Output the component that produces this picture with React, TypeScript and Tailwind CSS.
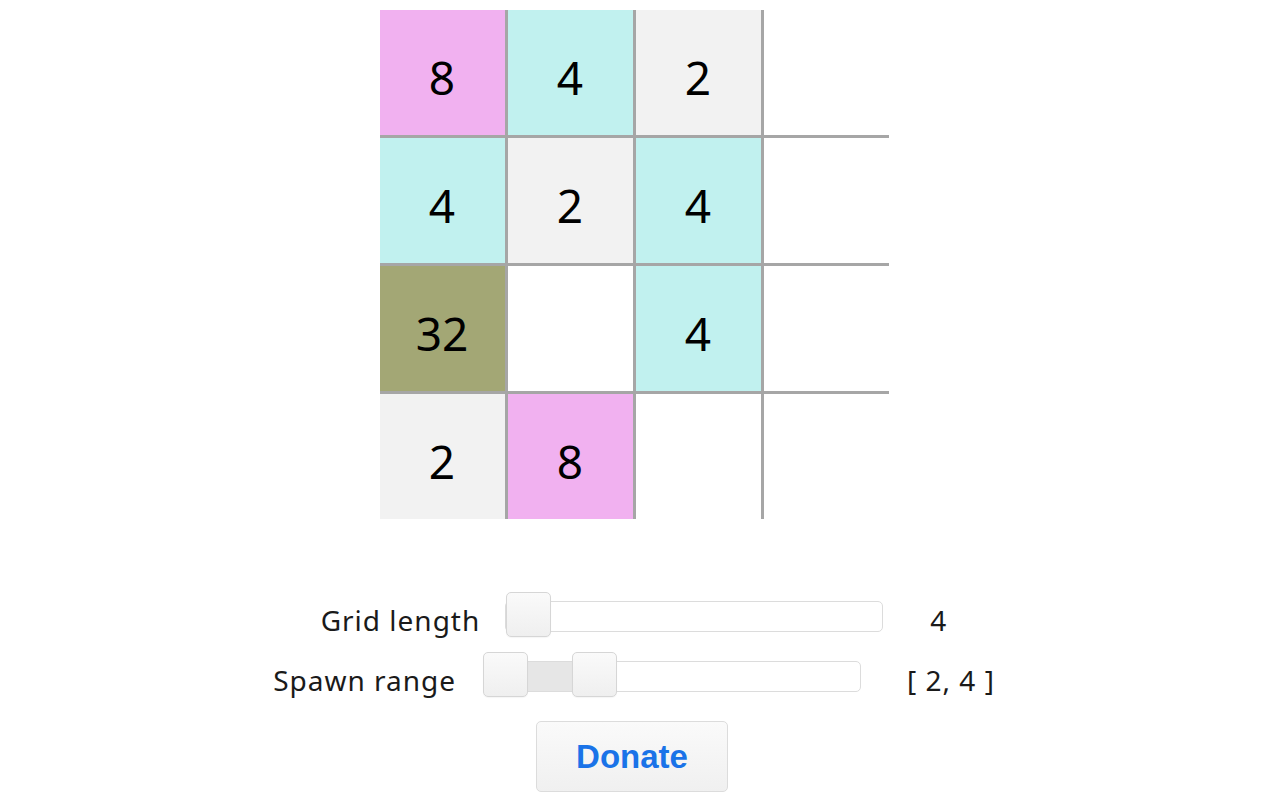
import React from "react";

const cells: (number | null)[][] = [
  [8, 4, 2, null],
  [4, 2, 4, null],
  [32, null, 4, null],
  [2, 8, null, null],
];

function tileColor(v: number | null) {
  if (v === 2) return "bg-[#f2f2f2]";
  if (v === 4) return "bg-[#c1f1ef]";
  if (v === 8) return "bg-[#f1b1f0]";
  if (v === 32) return "bg-[#a3a775]";
  return "bg-white";
}

function Thumb({ left }: { left: number }) {
  return (
    <div
      className="absolute top-[-10px] h-[45px] w-[45px] rounded-[5px] border border-[#d6d6d6] bg-gradient-to-b from-[#fafafa] to-[#efefef] shadow-[0_1px_1px_rgba(0,0,0,0.04)]"
      style={{ left }}
    />
  );
}

export default function App() {
  return (
    <div className="w-[1268px] min-h-[800px] bg-white pt-[10px] flex flex-col items-center font-['Noto_Sans','Open_Sans',sans-serif] text-[#1a1a1a]">
      <div className="grid grid-cols-[repeat(4,125px)] grid-rows-[repeat(4,125px)] gap-[3px] bg-[#a6a6a6]">
        {cells.flat().map((v, i) => (
          <div
            key={i}
            className={`${tileColor(v)} flex items-center justify-center pt-[10px] text-[46px] text-black`}
          >
            {v ?? ""}
          </div>
        ))}
      </div>

      <div className="mt-[73px] flex flex-col items-center gap-[15px]">
        <div className="flex h-[45px] items-start">
          <span className="mt-[14px] mr-[25px] text-[28px] leading-none tracking-[1px]">Grid length</span>
          <div className="relative mt-[9px] h-[31px] w-[378px] rounded-[5px] border border-[#dcdcdc] bg-white">
            <Thumb left={0} />
          </div>
          <span className="mt-[14px] ml-[47px] text-[28px] leading-none tracking-[1px]">4</span>
        </div>

        <div className="flex h-[45px] items-start">
          <span className="mt-[14px] mr-[27px] text-[28px] leading-none tracking-[1px]">Spawn range</span>
          <div className="relative mt-[9px] h-[31px] w-[378px] rounded-[5px] border border-[#dcdcdc] bg-white">
            <div className="absolute top-0 bottom-0 left-[43px] w-[46px] bg-[#e6e6e6]" />
            <Thumb left={-1} />
            <Thumb left={88} />
          </div>
          <span className="mt-[14px] ml-[46px] text-[28px] leading-none tracking-[1px]">[ 2, 4 ]</span>
        </div>

        <button className="mt-[9px] mr-[4px] h-[71px] w-[192px] rounded-[5px] border border-[#dcdcdc] bg-gradient-to-b from-[#fafafa] to-[#f0f0f0] font-['Liberation_Sans',Arial,sans-serif] text-[33px] font-bold text-[#1a73e8]">
          Donate
        </button>
      </div>
    </div>
  );
}
